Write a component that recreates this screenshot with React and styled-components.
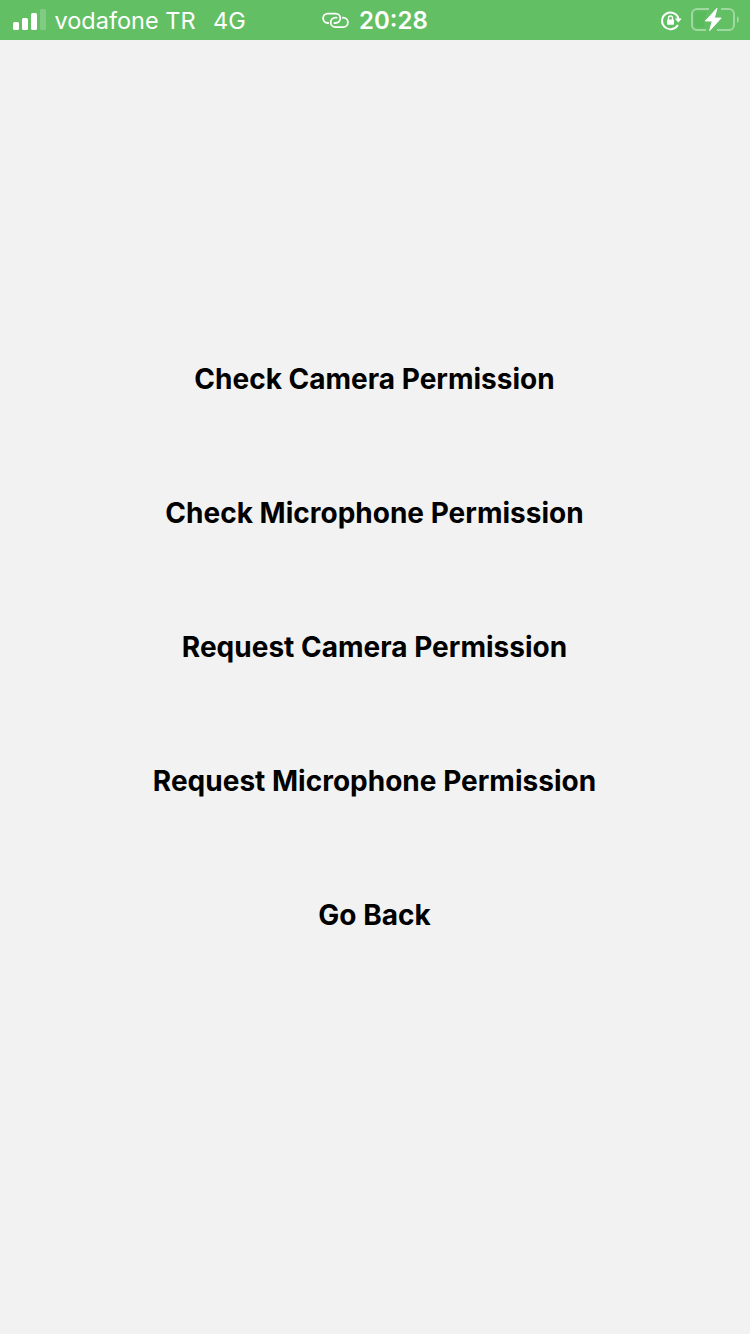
import React from "react";
import styled, { createGlobalStyle } from "styled-components";

const Global = createGlobalStyle`
  body { margin: 0; background: #f2f2f2; font-family: Inter, "Liberation Sans", sans-serif; }
`;
const Screen = styled.main`
  width: 750px; height: 1334px; box-sizing: border-box; display: flex; flex-direction: column; background: #f2f2f2;
`;
const StatusBar = styled.header`
  height: 40px; box-sizing: border-box; display: grid; grid-template-columns: 309px 1fr auto;
  background: #62bf64; color: #fff; padding: 0 11px 0 13px;
`;
const Group = styled.div`
  display: flex; align-items: center; height: 40px;
  gap: ${(p) => p.$gap}px;
`;
const Icon = styled.svg`
  display: block; flex: none;
`;
const StatusText = styled.span`
  font-size: ${(p) => p.$strong ? 24 : 23.5}px; font-weight: ${(p) => p.$strong ? 600 : 400};
  line-height: 40px; padding-top: 1px; white-space: nowrap;
`;
const Network = styled(StatusText)`
  margin-left: 9px;
`;
const Actions = styled.section`
  padding-top: 272px; display: flex; flex-direction: column; align-items: center;
`;
const Action = styled.button`
  border: 0; padding: 0 1px 0 0; background: none; height: 134px; color: #000;
  font: 700 28px/134px Inter, "Liberation Sans", sans-serif; letter-spacing: 0.01px; white-space: nowrap;
`;

const actions = ["Check Camera Permission", "Check Microphone Permission", "Request Camera Permission", "Request Microphone Permission", "Go Back"];

const SignalIcon = () => (
  <Icon width="33" height="22" viewBox="0 0 33 22" fill="#fff">
    <rect y="13" width="6" height="8" rx="1.5" />
    <rect x="9" y="9" width="6" height="12" rx="1.5" />
    <rect x="18" y="4" width="6" height="17" rx="1.5" />
    <rect x="27" width="6" height="21" rx="1.5" opacity=".2" />
  </Icon>
);
const LinkIcon = () => (
  <Icon width="28" height="18" viewBox="0 0 28 18" fill="none" stroke="#fff" strokeWidth="1.8" strokeLinecap="round">
    <path d="M6.200 12H5.800a4.700 4.700 0 0 1 0-9.400h7.800a4.700 4.700 0 0 1 0 9.400h-1.200" />
    <path d="M20.800 6.700h.4a4.700 4.700 0 0 1 0 9.400h-7.800a4.700 4.700 0 0 1 0-9.400h1.200" />
  </Icon>
);
const RotationLockIcon = () => (
  <Icon width="22" height="22" viewBox="0 0 22 22" fill="#fff">
    <path d="M17.500 16.500A8.400 8.400 0 1 1 18.500 9.500" fill="none" stroke="#fff" strokeWidth="1.900" strokeLinecap="round" />
    <path d="M14.800 9.400h7L18.300 13.600z" />
    <rect x="7" y="10.500" width="7" height="5.300" rx=".8" />
    <path d="M8.500 10.900V9a2 2 0 0 1 4 0v1.900" fill="none" stroke="#fff" strokeWidth="1.300" />
  </Icon>
);
const BatteryIcon = () => (
  <Icon width="48" height="26" viewBox="0 0 48 26">
    <path d="M6 4.500h10L12.500 13l1 7.500H6a2.500 2.500 0 0 1-2.500-2.500V7A2.500 2.500 0 0 1 6 4.500z" fill="#5abb5c" />
    <path d="M18 2H6a5 5 0 0 0-5 5v11a5 5 0 0 0 5 5h9M26 23h12a5 5 0 0 0 5-5V7a5 5 0 0 0-5-5H30" fill="none" stroke="#fff" strokeWidth="2" opacity=".4" />
    <path d="M46 9v7q2-1 2-3.500T46 9z" fill="#fff" opacity=".4" />
    <path d="M26 1.300 14.300 14h6.900L18.600 23.700 30.200 11h-6.800z" fill="#fff" stroke="#fff" strokeWidth=".9" strokeLinejoin="round" />
  </Icon>
);

export default function App() {
  return (
    <Screen>
      <Global />
      <StatusBar>
        <Group $gap={8.5}>
          <SignalIcon />
          <StatusText>vodafone TR</StatusText>
          <Network>4G</Network>
        </Group>
        <Group $gap={9}>
          <LinkIcon />
          <StatusText $strong>20:28</StatusText>
        </Group>
        <Group $gap={9}>
          <RotationLockIcon />
          <BatteryIcon />
        </Group>
      </StatusBar>
      <Actions>{actions.map((a) => <Action key={a}>{a}</Action>)}</Actions>
    </Screen>
  );
}
